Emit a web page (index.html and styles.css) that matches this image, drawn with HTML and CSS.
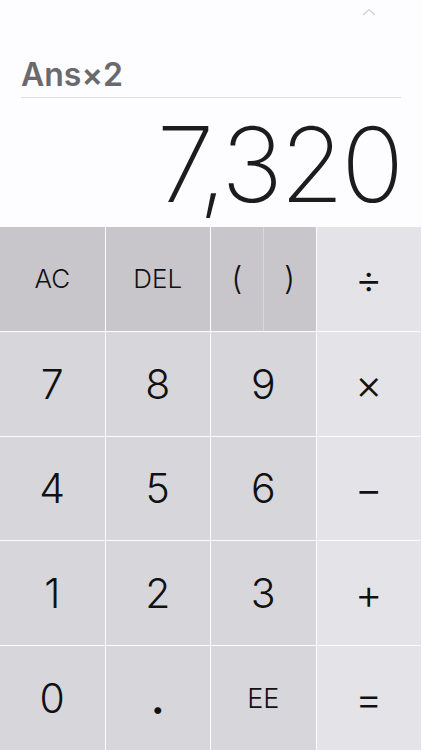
FILE: index.html
```html
<!DOCTYPE html>
<html lang="en">
<head>
    <meta charset="UTF-8">
    <meta name="viewport" content="width=device-width, initial-scale=1.0">
    <title>Calculator</title>
    <link rel="stylesheet" href="styles.css">
</head>
<body>
    <div class="calc">
        <div class="display">
            <div class="chevron">
                <svg width="14" height="8" viewBox="0 0 14 8"><path d="M1 7 L7 1.5 L13 7" fill="none" stroke="#cfcfd3" stroke-width="1.2"/></svg>
            </div>
            <div class="expression">Ans×2</div>
            <div class="result">7,320</div>
        </div>
        <div class="keypad">
            <button class="key fn small">AC</button>
            <button class="key fn small">DEL</button>
            <div class="key fn parens">
                <button class="half">(</button>
                <button class="half">)</button>
            </div>
            <button class="key op">÷</button>

            <button class="key num">7</button>
            <button class="key num">8</button>
            <button class="key num">9</button>
            <button class="key op">×</button>

            <button class="key num">4</button>
            <button class="key num">5</button>
            <button class="key num">6</button>
            <button class="key op">−</button>

            <button class="key num">1</button>
            <button class="key num">2</button>
            <button class="key num">3</button>
            <button class="key op">+</button>

            <button class="key num">0</button>
            <button class="key num dot">.</button>
            <button class="key num ee">EE</button>
            <button class="key op">=</button>
        </div>
    </div>
</body>
</html>
```

FILE: styles.css
```css
body {
    margin: 0;
    background-color: #fdfcfe;
    font-family: Inter, "Liberation Sans", sans-serif;
}
.calc {
    width: 422px;
    height: 750px;
    display: flex;
    flex-direction: column;
}
.display {
    height: 227px;
    padding: 0 21px;
    box-sizing: border-box;
    display: flex;
    flex-direction: column;
}
.chevron {
    display: flex;
    justify-content: flex-end;
    padding: 8px 25px 0 0;
    height: 10px;
}
.expression {
    margin-top: 38px;
    font-size: 32px;
    font-weight: 600;
    line-height: 38px;
    color: #6a6a6c;
    padding-bottom: 3px;
    border-bottom: 1px solid #dedde2;
}
.result {
    margin-top: 14px;
    text-align: right;
    font-size: 104px;
    font-weight: 200;
    line-height: 104px;
    color: #1c1c1e;
    letter-spacing: -3px;
}
.keypad {
    height: 523px;
    display: grid;
    grid-template-columns: repeat(4, 1fr);
    grid-template-rows: repeat(5, 1fr);
    gap: 1px;
    padding-right: 1px;
    background-color: #fdfcfe;
}
.key {
    border: none;
    margin: 0;
    padding: 0;
    font-family: Inter, "Liberation Sans", sans-serif;
    font-weight: 300;
    font-size: 41px;
    color: #111;
    display: flex;
    align-items: center;
    justify-content: center;
}
.fn { background-color: #c8c6cb; }
.num { background-color: #d7d6db; }
.op { background-color: #e4e3e8; font-size: 42px; }
.small { font-size: 26px; }
.ee { font-size: 27px; }
.dot { font-size: 44px; font-weight: 600; padding-top: 0; }
.parens {
    align-items: stretch;
    gap: 1px;
    background-color: #d9d8dc;
}
.half {
    flex: 1;
    border: none;
    background-color: #c8c6cb;
    font-family: Inter, "Liberation Sans", sans-serif;
    font-weight: 300;
    font-size: 32px;
    color: #111;
    padding: 0;
}
```
